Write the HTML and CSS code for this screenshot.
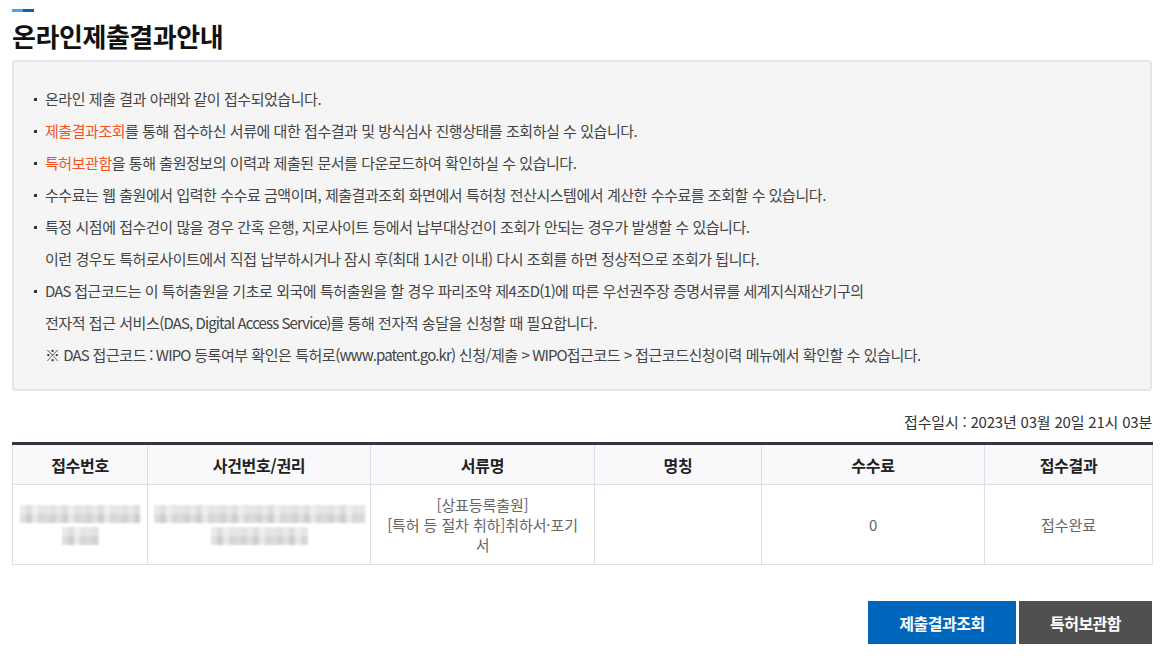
FILE: index.html
```html
<!DOCTYPE html>
<html lang="ko">
<head>
<meta charset="utf-8">
<title>온라인제출결과안내</title>
<link rel="stylesheet" href="styles.css">
</head>
<body>
<div class="page">
  <div class="accent"><span class="a1"></span><span class="a2"></span></div>
  <h1 class="title">온라인제출결과안내</h1>
  <div class="info-box">
    <ul class="info-list">
      <li>온라인 제출 결과 아래와 같이 접수되었습니다.</li>
      <li><span class="hl">제출결과조회</span>를 통해 접수하신 서류에 대한 접수결과 및 방식심사 진행상태를 조회하실 수 있습니다.</li>
      <li><span class="hl">특허보관함</span>을 통해 출원정보의 이력과 제출된 문서를 다운로드하여 확인하실 수 있습니다.</li>
      <li>수수료는 웹 출원에서 입력한 수수료 금액이며, 제출결과조회 화면에서 특허청 전산시스템에서 계산한 수수료를 조회할 수 있습니다.</li>
      <li>특정 시점에 접수건이 많을 경우 간혹 은행, 지로사이트 등에서 납부대상건이 조회가 안되는 경우가 발생할 수 있습니다.<br>이런 경우도 특허로사이트에서 직접 납부하시거나 잠시 후(최대 1시간 이내) 다시 조회를 하면 정상적으로 조회가 됩니다.</li>
      <li><span class="en">DAS</span> 접근코드는 이 특허출원을 기초로 외국에 특허출원을 할 경우 파리조약 제4조<span class="en">D(1)</span>에 따른 우선권주장 증명서류를 세계지식재산기구의<br>전자적 접근 서비스<span class="en">(DAS, Digital Access Service)</span>를 통해 전자적 송달을 신청할 때 필요합니다.<br>※ <span class="en">DAS</span> 접근코드<span class="en"> : WIPO</span> 등록여부 확인은 특허로<span class="en">(www.patent.go.kr)</span> 신청/제출 <span class="en">&gt; WIPO</span>접근코드 <span class="en">&gt;</span> 접근코드신청이력 메뉴에서 확인할 수 있습니다.</li>
    </ul>
  </div>
  <p class="date">접수일시 : 2023년 03월 20일 21시 03분</p>
  <table class="result">
    <colgroup>
      <col class="c1"><col class="c2"><col class="c3"><col class="c4"><col class="c5"><col class="c6">
    </colgroup>
    <thead>
      <tr><th>접수번호</th><th>사건번호/권리</th><th>서류명</th><th>명칭</th><th>수수료</th><th>접수결과</th></tr>
    </thead>
    <tbody>
      <tr>
        <td class="masked"><div class="blur"><span class="b w120"></span><span class="b w37"></span></div></td>
        <td class="masked"><div class="blur"><span class="b w211"></span><span class="b w97"></span></div></td>
        <td class="doc">[상표등록출원]<br>[특허 등 절차 취하]취하서·포기서</td>
        <td></td>
        <td>0</td>
        <td>접수완료</td>
      </tr>
    </tbody>
  </table>
  <div class="buttons">
    <button class="btn primary">제출결과조회</button>
    <button class="btn dark">특허보관함</button>
  </div>
</div>
</body>
</html>
```

FILE: styles.css
```css
* { box-sizing: border-box; }
html, body { margin: 0; padding: 0; background: #fff; }
body {
  font-family: "Noto Sans CJK KR", "Noto Sans", sans-serif;
  color: #444;
}
.page { padding: 9px 12px 0 12px; }
.accent { display: flex; height: 3px; }
.accent .a1 { width: 11px; background: #46a6e2; }
.accent .a2 { width: 11px; background: #1b57a9; }
.title {
  margin: 6px 0 0 0;
  font-size: 26px;
  line-height: 36px;
  font-weight: 700;
  letter-spacing: -0.45px;
  color: #111;
}
.info-box {
  margin-top: 6px;
  background: #f5f5f5;
  border: 2px solid #e2e5ec;
  border-radius: 4px;
  padding: 21px 20px 18px 20px;
}
.info-list { list-style: none; margin: 0; padding: 0; }
.info-list li {
  position: relative;
  padding-left: 11px;
  font-size: 15px;
  line-height: 32px;
  letter-spacing: -0.45px;
  color: #444;
}
.info-list li::before {
  content: "";
  position: absolute;
  left: 0;
  top: 15px;
  width: 3px;
  height: 3px;
  background: #333;
}
.info-list .en { letter-spacing: -0.9px; }
.hl { color: #f4511e; }
.date {
  margin: 21px 0 0 0;
  text-align: right;
  font-size: 15px;
  line-height: 20px;
  letter-spacing: -0.2px;
  color: #333;
}
.result {
  margin-top: 10px;
  width: 100%;
  border-collapse: collapse;
  table-layout: fixed;
  border-top: 3px solid #34383e;
}
.c1 { width: 135px; }
.c2 { width: 223px; }
.c3 { width: 224px; }
.c4 { width: 167px; }
.c5 { width: 223px; }
.c6 { width: 168px; }
.result th, .result td {
  border: 1px solid #dcdee6;
  text-align: center;
}
.result th {
  background: #f9f9fb;
  height: 41px;
  font-size: 16px;
  letter-spacing: -0.3px;
  font-weight: 700;
  color: #222;
}
.result td {
  height: 80px;
  font-size: 15px;
  letter-spacing: -0.1px;
  color: #666;
  line-height: 20px;
  padding: 0 10px;
}
.result td.doc { padding: 0 15px; }
.result td.masked { padding: 0 4px; }
.blur { display: flex; flex-direction: column; align-items: center; gap: 4px; filter: blur(1.2px); opacity: 0.85; }
.b {
  display: block;
  height: 18px;
  background:
    linear-gradient(180deg, rgba(255,255,255,0.35) 0 9px, rgba(255,255,255,0) 9px 18px),
    repeating-linear-gradient(90deg, #dadada 0 6px, #c6c6c6 6px 12px, #e4e4e4 12px 18px, #cfd1d6 18px 24px, #d7d4cf 24px 30px, #c9cbcf 30px 36px);
}
.w120 { width: 120px; }
.w37 { width: 37px; }
.w211 { width: 211px; }
.w97 { width: 97px; }
.buttons {
  display: flex;
  justify-content: flex-end;
  gap: 3px;
  margin-top: 36px;
}
.btn {
  border: 0;
  height: 43px;
  font-family: "Noto Sans CJK KR", "Noto Sans", sans-serif;
  font-size: 16px;
  font-weight: 700;
  color: #fff;
  letter-spacing: -0.5px;
  cursor: pointer;
}
.btn.primary { width: 148px; background: #0066bb; }
.btn.dark { width: 133px; background: #505050; }
```
